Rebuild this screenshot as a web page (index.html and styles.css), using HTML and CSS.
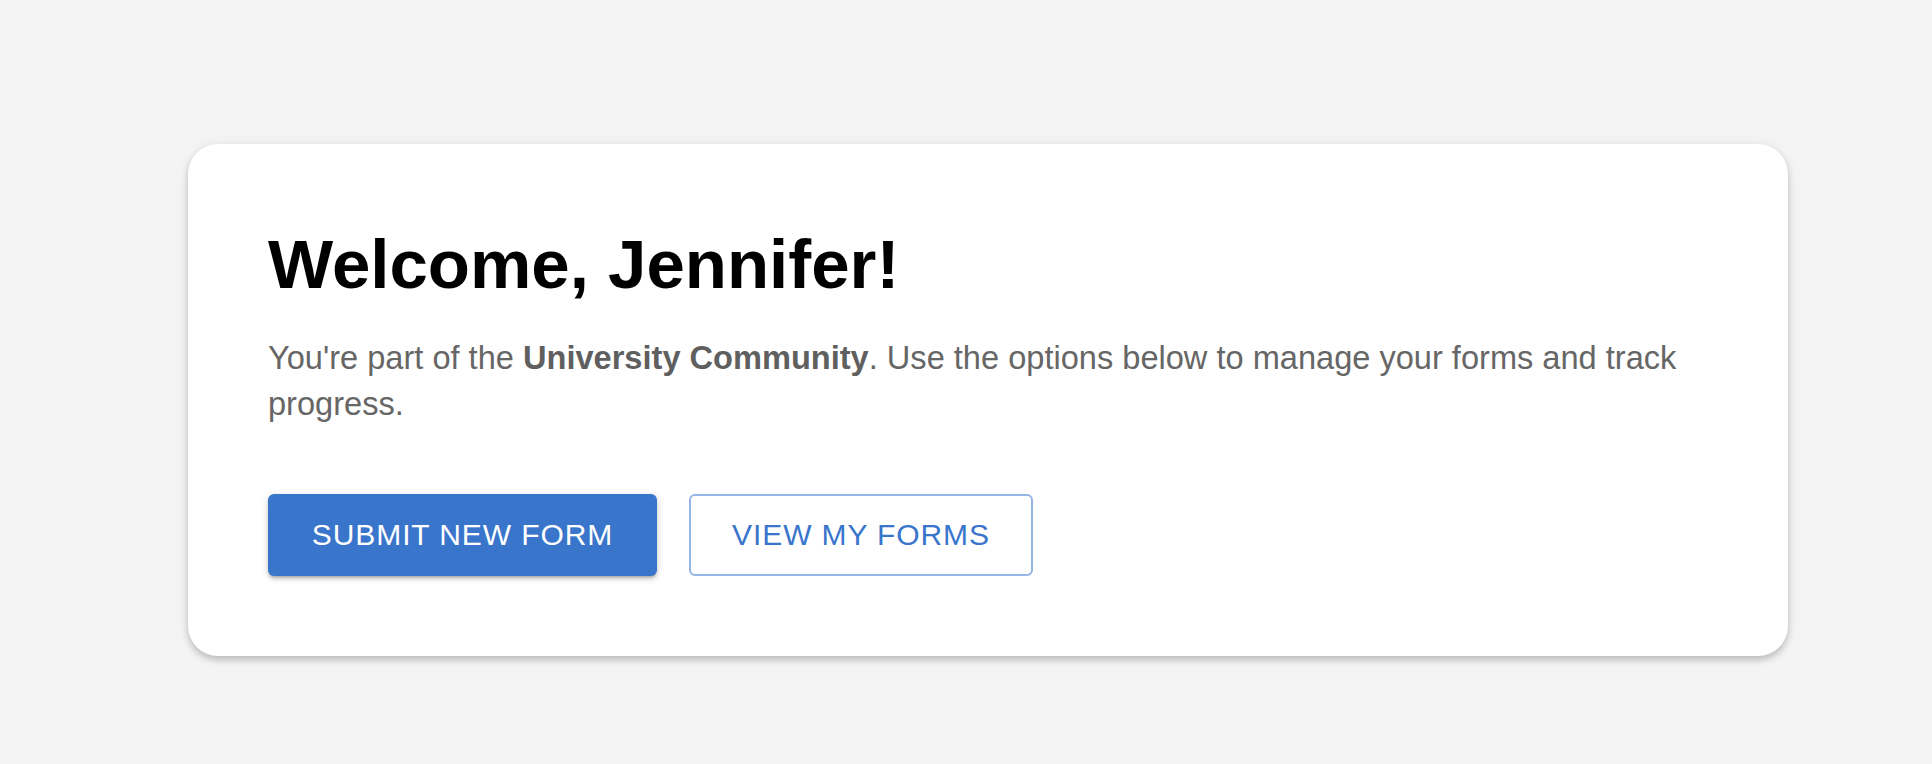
FILE: index.html
```html
<!DOCTYPE html>
<html lang="en">
<head>
<meta charset="utf-8">
<title>Welcome</title>
<link rel="stylesheet" href="styles.css">
</head>
<body>
  <main class="page">
    <section class="card">
      <h1 class="title">Welcome, Jennifer!</h1>
      <p class="lead">You're part of the <strong>University Community</strong>. Use the options below to manage your forms and track progress.</p>
      <div class="actions">
        <button class="btn btn-primary" type="button">Submit New Form</button>
        <button class="btn btn-outline" type="button">View My Forms</button>
      </div>
    </section>
  </main>
</body>
</html>
```
FILE: styles.css
```css
* { box-sizing: border-box; }
html, body {
  margin: 0;
  padding: 0;
  background: #f4f4f4;
  font-family: "Liberation Sans", Arial, Helvetica, sans-serif;
}
.page {
  padding: 144px 0 0 188px;
  min-height: 764px;
}
.card {
  width: 1600px;
  background: #ffffff;
  border-radius: 30px;
  padding: 80px;
  box-shadow: 0 4px 6px rgba(0, 0, 0, 0.18), 0 2px 14px rgba(0, 0, 0, 0.08);
}
.title {
  margin: 0 0 30px;
  font-size: 69px;
  line-height: 81px;
  font-weight: 700;
  color: #000;
}
.lead {
  margin: 0;
  font-size: 32.6px;
  line-height: 46px;
  color: #666666;
}
.lead strong {
  font-weight: 700;
  color: #5f5f5f;
}
.actions {
  display: flex;
  gap: 32px;
  margin-top: 67px;
}
.btn {
  font-family: "Liberation Sans", Arial, Helvetica, sans-serif;
  font-size: 30px;
  letter-spacing: 0.03em;
  text-transform: uppercase;
  height: 82px;
  border-radius: 6px;
  cursor: pointer;
  display: inline-flex;
  align-items: center;
  justify-content: center;
}
.btn-primary {
  width: 389px;
  background: #3a75cc;
  color: #ffffff;
  border: none;
  box-shadow: 0 3px 3px -2px rgba(0,0,0,0.25), 0 3px 5px rgba(0,0,0,0.14), 0 1px 8px rgba(0,0,0,0.1);
}
.btn-outline {
  width: 344px;
  background: #ffffff;
  color: #3a75cc;
  border: 2px solid #95b5e6;
}
```
